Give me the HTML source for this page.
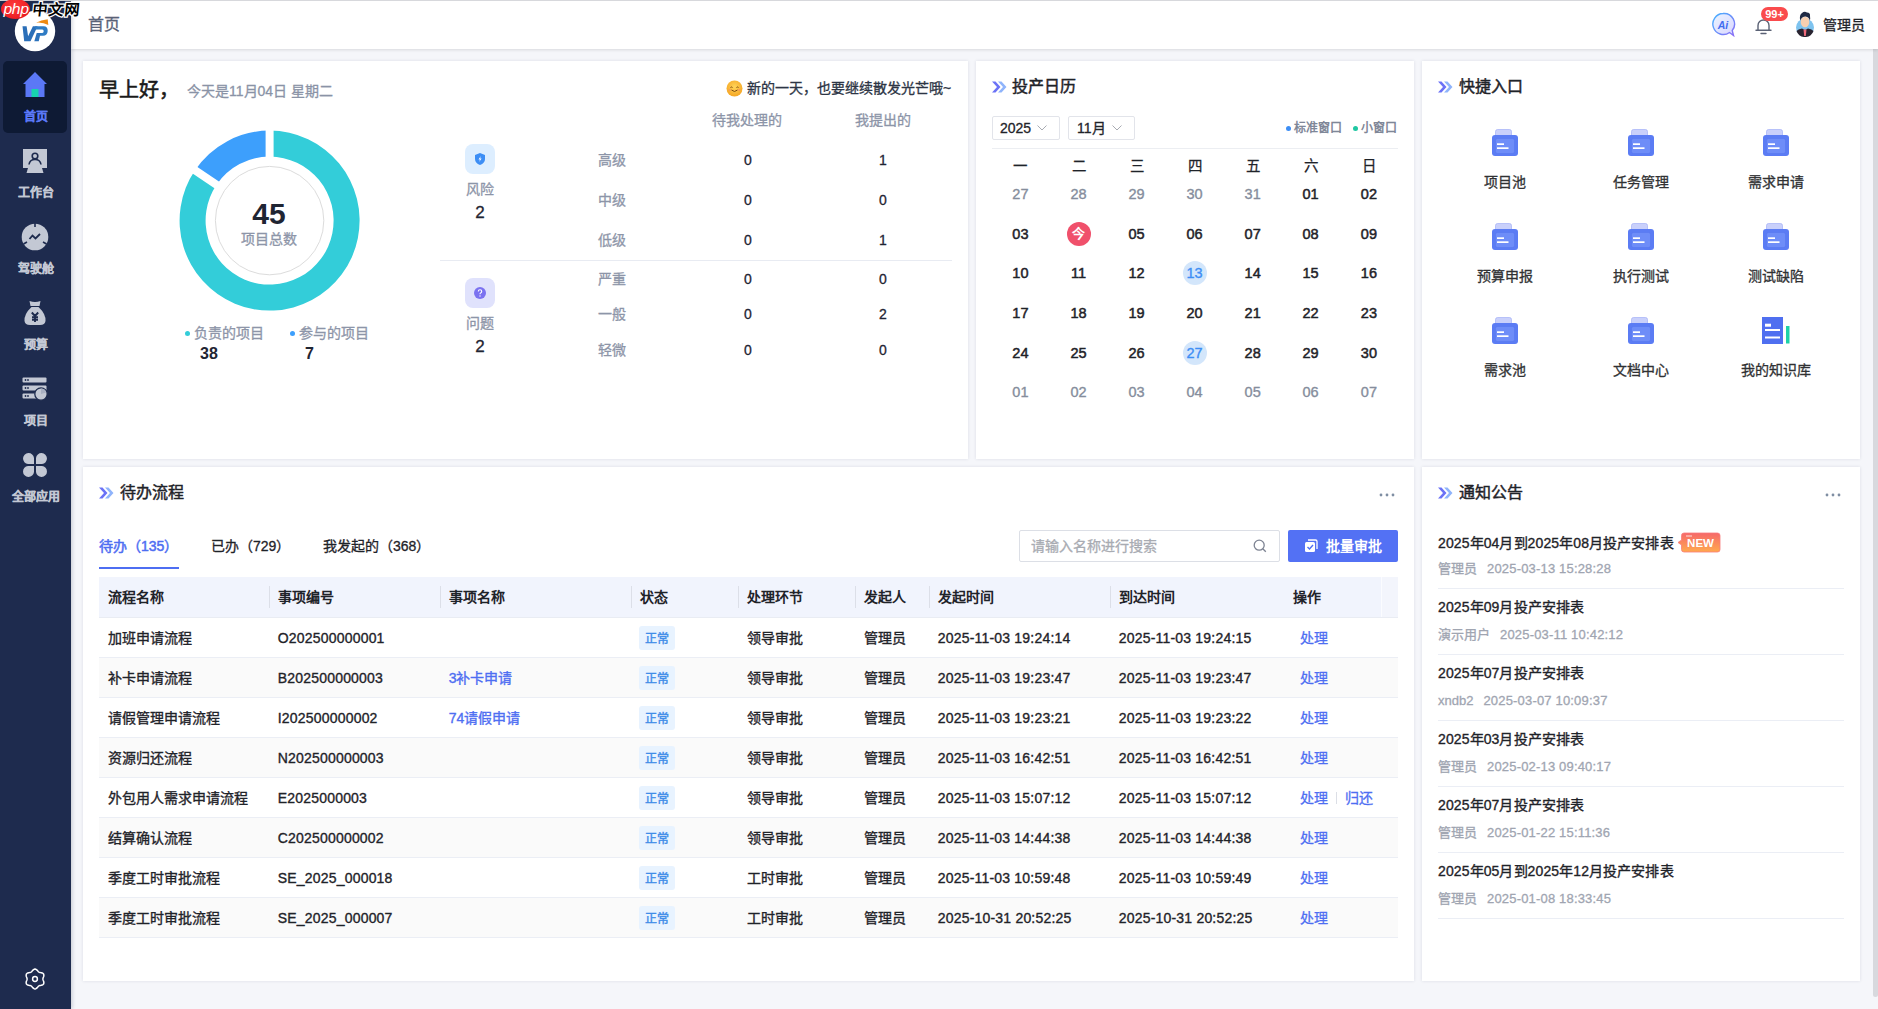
<!DOCTYPE html>
<html lang="zh-CN">
<head>
<meta charset="utf-8">
<style>
*{box-sizing:border-box;margin:0;padding:0}
html,body{width:1878px;height:1009px;overflow:hidden}
body{position:relative;background:#f5f6fa;font-family:"Liberation Sans",sans-serif;font-size:14px;color:#1f2329;-webkit-text-stroke:0.3px currentColor}
[style*="font-weight:700"]{-webkit-text-stroke:0}
.a{position:absolute;white-space:nowrap}
#topline{position:absolute;left:0;top:0;width:1878px;height:1px;background:#dcdde1}
#side{position:absolute;left:0;top:1px;width:71px;height:1008px;background:#1e2b4e;z-index:2;box-shadow:1px 0 4px rgba(20,30,60,.22)}
#side .edge{position:absolute;right:0;top:0;width:1px;height:100%;background:#16223f}
#hdr{position:absolute;left:71px;top:1px;width:1807px;height:48px;background:#fff;box-shadow:0 1px 3px rgba(0,0,0,.12);z-index:1}
.card{position:absolute;background:#fff;box-shadow:0 0 3px rgba(30,40,70,.12)}
#scroll{position:absolute;left:1873px;top:49px;width:5px;height:948px;background:#d8d9de;border-radius:0 0 3px 3px}
.nav{position:absolute;left:0;width:71px;text-align:center;font-size:12px;font-weight:700;color:#c3c8d4;-webkit-text-stroke:0.25px currentColor}
.m{-webkit-text-stroke:0.35px currentColor}
.ttl{font-size:16px;color:#1f2329;-webkit-text-stroke:0.45px currentColor}
</style>
</head>
<body>
<div id="topline"></div>
<div id="side">
<div class="a" style="left:3px;top:60px;width:64px;height:72px;background:#0e1a34;border-radius:5px"></div>
<svg class="a" style="left:23px;top:71px" width="24" height="25" viewBox="0 0 24 25"><path d="M12 0L0 12H2.5V25H21.5V12H24Z" fill="#5b78f6"/><rect x="8.5" y="17" width="7" height="8" fill="#17d4ae"/></svg>
<div class="nav" style="top:106px;color:#5b78f6">首页</div>
<svg class="a" style="left:23px;top:148px" width="24" height="24" viewBox="0 0 24 24"><rect x="0" y="0" width="24" height="19" fill="#c3c8d4"/><path d="M5 19H19L20.5 24H3.5Z" fill="#c3c8d4"/><circle cx="12" cy="7" r="2.8" fill="none" stroke="#1e2b4e" stroke-width="1.6"/><path d="M6 15.5C6.5 12 9 10.5 12 10.5S17.5 12 18 15.5" fill="none" stroke="#1e2b4e" stroke-width="1.6"/></svg>
<div class="nav" style="top:182px">工作台</div>
<svg class="a" style="left:21px;top:222px" width="28" height="28" viewBox="0 0 28 28"><circle cx="14" cy="14" r="13.3" fill="#c3c8d4"/><path d="M14 0V4M2.5 21L6 19M25.5 21L22 19" stroke="#1e2b4e" stroke-width="1.6"/><path d="M8.5 16L11.5 12.5L14.5 15.5L19 11" fill="none" stroke="#1e2b4e" stroke-width="1.8"/></svg>
<div class="nav" style="top:258px">驾驶舱</div>
<svg class="a" style="left:23px;top:300px" width="24" height="24" viewBox="0 0 24 24"><path d="M6.5 0Q12 1.8 17.5 0L16.5 5H7.5Z" fill="#c3c8d4"/><path d="M8.5 6H15.5Q23 13 22.5 20Q22 24 17 24H7Q2 24 1.5 20Q1 13 8.5 6Z" fill="#c3c8d4"/><path d="M8.8 11.5L12 15L15.2 11.5M12 15V21M9 16.2H15M9 18.8H15" fill="none" stroke="#1e2b4e" stroke-width="1.9"/></svg>
<div class="nav" style="top:334px">预算</div>
<svg class="a" style="left:22px;top:376px" width="26" height="24" viewBox="0 0 26 24"><rect x="0.5" y="0.5" width="24" height="5" rx="1" fill="#c3c8d4"/><rect x="0.5" y="8.5" width="24" height="5" rx="1" fill="#c3c8d4"/><rect x="0.5" y="16.5" width="15" height="5" rx="1" fill="#c3c8d4"/><circle cx="3.5" cy="3" r="0.9" fill="#1e2b4e"/><circle cx="6" cy="3" r="0.9" fill="#1e2b4e"/><circle cx="3.5" cy="11" r="0.9" fill="#1e2b4e"/><circle cx="6" cy="11" r="0.9" fill="#1e2b4e"/><circle cx="3.5" cy="19" r="0.9" fill="#1e2b4e"/><circle cx="6" cy="19" r="0.9" fill="#1e2b4e"/><circle cx="19" cy="17" r="6.2" fill="#c3c8d4" stroke="#1e2b4e" stroke-width="1.3"/><path d="M19 17V11.5A5.5 5.5 0 0 1 24.3 15.5Z" fill="#a9b0c2"/></svg>
<div class="nav" style="top:410px">项目</div>
<svg class="a" style="left:22px;top:451px" width="26" height="26" viewBox="0 0 26 26"><path d="M12 12H6A5.5 5.5 0 1 1 12 6Z" fill="#c3c8d4"/><path d="M14 12V6A5.5 5.5 0 1 1 20 12Z" fill="#c3c8d4"/><path d="M12 14V20A5.5 5.5 0 1 1 6 14Z" fill="#c3c8d4"/><path d="M14 14H20A5.5 5.5 0 1 1 14 20Z" fill="#c3c8d4"/></svg>
<div class="nav" style="top:486px">全部应用</div>
<svg class="a" style="left:24px;top:966.5px" width="22" height="22" viewBox="0 0 22 22"><path d="M11.00 1.10L11.85 1.27L12.63 1.74L13.30 2.40L13.87 3.11L14.40 3.72L14.95 4.16L15.61 4.42L16.40 4.57L17.29 4.71L18.20 4.96L19.00 5.40L19.57 6.05L19.85 6.87L19.83 7.79L19.60 8.70L19.27 9.54L19.00 10.30L18.90 11.00L19.00 11.70L19.27 12.46L19.60 13.30L19.83 14.21L19.85 15.13L19.57 15.95L19.00 16.60L18.20 17.04L17.29 17.29L16.40 17.43L15.61 17.58L14.95 17.84L14.40 18.28L13.87 18.89L13.30 19.60L12.63 20.26L11.85 20.73L11.00 20.90L10.15 20.73L9.37 20.26L8.70 19.60L8.13 18.89L7.60 18.28L7.05 17.84L6.39 17.58L5.60 17.43L4.71 17.29L3.80 17.04L3.00 16.60L2.43 15.95L2.15 15.13L2.17 14.21L2.40 13.30L2.73 12.46L3.00 11.70L3.10 11.00L3.00 10.30L2.73 9.54L2.40 8.70L2.17 7.79L2.15 6.87L2.43 6.05L3.00 5.40L3.80 4.96L4.71 4.71L5.60 4.57L6.39 4.42L7.05 4.16L7.60 3.72L8.13 3.11L8.70 2.40L9.37 1.74L10.15 1.27Z" fill="none" stroke="#fff" stroke-width="1.5" stroke-linejoin="round"/><circle cx="11" cy="11" r="2.4" fill="none" stroke="#fff" stroke-width="1.5"/></svg>
<svg class="a" style="left:0;top:0" width="71" height="60" viewBox="0 0 71 60"><circle cx="35" cy="30" r="20.2" fill="#fff"/><path d="M22.5 25.3H26.6L28.1 35.2L32.9 25.3H37.6L30.5 40.2H24.2Z" fill="#2b6fb8"/><path d="M35 25.3H43.6Q47.9 25.3 47.7 30Q47.4 34.8 43 34.8H37.2L37.8 32.1H42.3Q43.6 32 43.7 30.3Q43.7 28.6 42.3 28.6H35.5Z" fill="#2f7cc4"/><path d="M36.7 32.1H40.6L38.8 40.2H34.3Z" fill="#2b72bc"/><path d="M36.1 21.7Q41 19 47.7 18.2L48.3 24.1Q43 21 36.1 21.7Z" fill="#ee8a12"/></svg>
</div>
<div id="hdr">
<div class="a" style="left:17px;top:13px;font-size:16px;color:#596277;line-height:22px">首页</div>
<svg class="a" style="left:1640px;top:11px" width="25" height="25" viewBox="0 0 25 25"><defs><linearGradient id="aig" x1="0" y1="0" x2="1" y2="1"><stop offset="0" stop-color="#eaf4ff"/><stop offset="1" stop-color="#d9d6ff"/></linearGradient><linearGradient id="ais" x1="0" y1="0" x2="1" y2="1"><stop offset="0" stop-color="#45b3ff"/><stop offset="1" stop-color="#8a6cf5"/></linearGradient></defs><path d="M12 1.5A10.5 10.5 0 1 0 18.5 20.5L22.5 23.5L21.2 18.5A10.5 10.5 0 0 0 12 1.5Z" fill="url(#aig)" stroke="url(#ais)" stroke-width="1.4"/><text x="12" y="16.5" text-anchor="middle" font-family="Liberation Sans" font-weight="700" font-size="10.5" fill="#3f6cf0" font-style="italic">Ai</text></svg>
<svg class="a" style="left:1684px;top:16px" width="17" height="18" viewBox="0 0 17 18"><path d="M3 13V8.5A5.5 5.5 0 0 1 14 8.5V13M1 13.2H16M6 16.5H11" fill="none" stroke="#5b6275" stroke-width="1.4" stroke-linecap="round"/></svg>
<div class="a" style="left:1690px;top:6px;width:27px;height:14px;border-radius:7px;background:#fa4b4d;color:#fff;font-size:11px;font-weight:700;line-height:14px;text-align:center">99+</div>
<svg class="a" style="left:1724px;top:9px" width="20" height="27" viewBox="0 0 20 27"><circle cx="10" cy="17.5" r="9" fill="#7ec3ef"/><path d="M1.5 21Q3 19 7 18.5L10 20L13 18.5Q17 19 18.5 21A9 9 0 0 1 1.5 21Z" fill="#2a2430"/><path d="M8.5 19.5H11.5L10.8 26H9.2Z" fill="#f06a7a"/><path d="M7 20L10 22L13 20L12 26H8Z" fill="#fff" opacity=".0"/><ellipse cx="10" cy="12" rx="4.3" ry="5.2" fill="#f7cfb0"/><path d="M5.2 10.5Q4 5 7 3Q9.5 1 12 2.5Q15.5 2.5 15 6Q15.5 9 14.8 10.5Q14 7 10.5 6.5Q7 6.5 5.2 10.5Z" fill="#1f2a44"/></svg>
<div class="a" style="left:1752px;top:13px;font-size:14px;color:#1f2329;line-height:22px">管理员</div>
</div>
<div id="scroll"></div>

<div class="card" style="left:83px;top:61px;width:885px;height:398px">
<svg class="a" style="left:0;top:0" width="885" height="398"><path d="M186.60 69.60A90 90 0 1 1 111.99 109.27L133.54 123.81A64 64 0 1 0 186.60 95.60Z" fill="#33cdd9"/><path d="M111.99 109.27A90 90 0 0 1 186.60 69.60L186.60 95.60A64 64 0 0 0 133.54 123.81Z" fill="#3d9ffc"/><line x1="186.60" y1="97.60" x2="186.60" y2="67.60" stroke="#fff" stroke-width="8"/><line x1="135.20" y1="124.93" x2="110.33" y2="108.15" stroke="#fff" stroke-width="8"/><circle cx="186.60000000000002" cy="159.6" r="54.2" fill="none" stroke="#dcdcdc" stroke-width="1"/></svg>
<div class="a" style="left:16px;top:16px;font-size:20px;color:#1a1a1a;line-height:26px;-webkit-text-stroke:0.55px #1a1a1a">早上好，</div>
<div class="a" style="left:104px;top:20px;font-size:14px;color:#8a93a6;line-height:20px">今天是11月04日 星期二</div>
<svg class="a" style="left:643px;top:19px" width="17" height="17" viewBox="0 0 17 17"><defs><radialGradient id="sm" cx="50%" cy="40%" r="60%"><stop offset="0" stop-color="#ffd45a"/><stop offset="1" stop-color="#f5a623"/></radialGradient></defs><circle cx="8.5" cy="8.5" r="8" fill="url(#sm)"/><path d="M4.5 7.5Q5.5 6.5 6.5 7.5M10.5 7.5Q11.5 6.5 12.5 7.5" fill="none" stroke="#7a4a10" stroke-width="1"/><path d="M5.5 10Q8.5 13 11.5 10" fill="none" stroke="#7a4a10" stroke-width="1"/><ellipse cx="3.8" cy="10" rx="1.3" ry="0.8" fill="#f57b7b" opacity=".7"/><ellipse cx="13.2" cy="10" rx="1.3" ry="0.8" fill="#f57b7b" opacity=".7"/></svg>
<div class="a" style="left:664px;top:17px;font-size:14px;color:#2d3545;line-height:20px">新的一天，也要继续散发光芒哦~</div>
<div class="a" style="left:136px;top:140px;width:100px;text-align:center;font-size:30px;font-weight:700;color:#1f2533;line-height:32px;margin-top:-3px">45</div>
<div class="a" style="left:136px;top:168px;width:100px;text-align:center;font-size:14px;color:#8d95a8;line-height:20px">项目总数</div>
<div class="a" style="left:102px;top:270px;width:5px;height:5px;border-radius:50%;background:#33cdd9"></div>
<div class="a" style="left:111px;top:262px;font-size:14px;color:#8d95a8;line-height:20px">负责的项目</div>
<div class="a" style="left:117px;top:283px;font-size:16px;font-weight:700;color:#1f2533;line-height:20px">38</div>
<div class="a" style="left:207px;top:270px;width:5px;height:5px;border-radius:50%;background:#3d9ffc"></div>
<div class="a" style="left:216px;top:262px;font-size:14px;color:#8d95a8;line-height:20px">参与的项目</div>
<div class="a" style="left:222px;top:283px;font-size:16px;font-weight:700;color:#1f2533;line-height:20px">7</div>
<div class="a" style="left:629px;top:49px;font-size:14px;color:#8d95a8;line-height:20px">待我处理的</div>
<div class="a" style="left:772px;top:49px;font-size:14px;color:#8d95a8;line-height:20px">我提出的</div>
<div class="a" style="left:382px;top:83px;width:30px;height:30px;border-radius:8px;background:#ddeeff"></div>
<svg class="a" style="left:390px;top:91px" width="14" height="14" viewBox="0 0 14 14"><path d="M7 1L12 3V7Q12 11 7 13Q2 11 2 7V3Z" fill="#3d8ef5"/><path d="M7.8 4L5.5 7.6H7L6.2 10L8.6 6.4H7.1Z" fill="#fff"/></svg>
<div class="a" style="left:382px;top:118px;width:30px;text-align:center;font-size:14px;color:#8d95a8;line-height:20px">风险</div>
<div class="a" style="left:382px;top:141px;width:30px;text-align:center;font-size:17px;color:#1f2533;line-height:22px">2</div>
<div class="a" style="left:357px;top:199px;width:512px;height:1px;background:#e8ebf2"></div>
<div class="a" style="left:382px;top:217px;width:30px;height:30px;border-radius:8px;background:#e0e2fc"></div>
<svg class="a" style="left:390px;top:225px" width="14" height="14" viewBox="0 0 14 14"><circle cx="7" cy="7" r="6" fill="#7b72f0"/><path d="M5.3 5.6Q5.3 3.8 7 3.8Q8.7 3.8 8.7 5.4Q8.7 6.5 7.5 7Q7 7.3 7 8.3" fill="none" stroke="#fff" stroke-width="1.1"/><circle cx="7" cy="10" r="0.7" fill="#fff"/></svg>
<div class="a" style="left:382px;top:252px;width:30px;text-align:center;font-size:14px;color:#8d95a8;line-height:20px">问题</div>
<div class="a" style="left:382px;top:275px;width:30px;text-align:center;font-size:17px;color:#1f2533;line-height:22px">2</div>
<div class="a" style="left:515px;top:89px;font-size:14px;color:#8d95a8;line-height:20px">高级</div>
<div class="a" style="left:615px;top:89px;width:100px;text-align:center;font-size:14px;color:#1f2533;line-height:20px">0</div>
<div class="a" style="left:750px;top:89px;width:100px;text-align:center;font-size:14px;color:#1f2533;line-height:20px">1</div>
<div class="a" style="left:515px;top:129px;font-size:14px;color:#8d95a8;line-height:20px">中级</div>
<div class="a" style="left:615px;top:129px;width:100px;text-align:center;font-size:14px;color:#1f2533;line-height:20px">0</div>
<div class="a" style="left:750px;top:129px;width:100px;text-align:center;font-size:14px;color:#1f2533;line-height:20px">0</div>
<div class="a" style="left:515px;top:169px;font-size:14px;color:#8d95a8;line-height:20px">低级</div>
<div class="a" style="left:615px;top:169px;width:100px;text-align:center;font-size:14px;color:#1f2533;line-height:20px">0</div>
<div class="a" style="left:750px;top:169px;width:100px;text-align:center;font-size:14px;color:#1f2533;line-height:20px">1</div>
<div class="a" style="left:515px;top:208px;font-size:14px;color:#8d95a8;line-height:20px">严重</div>
<div class="a" style="left:615px;top:208px;width:100px;text-align:center;font-size:14px;color:#1f2533;line-height:20px">0</div>
<div class="a" style="left:750px;top:208px;width:100px;text-align:center;font-size:14px;color:#1f2533;line-height:20px">0</div>
<div class="a" style="left:515px;top:243px;font-size:14px;color:#8d95a8;line-height:20px">一般</div>
<div class="a" style="left:615px;top:243px;width:100px;text-align:center;font-size:14px;color:#1f2533;line-height:20px">0</div>
<div class="a" style="left:750px;top:243px;width:100px;text-align:center;font-size:14px;color:#1f2533;line-height:20px">2</div>
<div class="a" style="left:515px;top:279px;font-size:14px;color:#8d95a8;line-height:20px">轻微</div>
<div class="a" style="left:615px;top:279px;width:100px;text-align:center;font-size:14px;color:#1f2533;line-height:20px">0</div>
<div class="a" style="left:750px;top:279px;width:100px;text-align:center;font-size:14px;color:#1f2533;line-height:20px">0</div>
</div>
<div class="card" style="left:976px;top:61px;width:438px;height:398px">
<svg class="a" style="left:15px;top:19px" width="16" height="14" viewBox="0 0 16 14"><path d="M1 1.5L6 7L1 12.5H4.5L9.5 7L4.5 1.5Z" fill="#6b72f6"/><path d="M7 1.5L12 7L7 12.5H10.5L15.5 7L10.5 1.5Z" fill="#8fb4fb"/></svg><div class="a ttl" style="left:36px;top:14px;line-height:24px">投产日历</div>
<div class="a" style="left:16px;top:55px;width:68px;height:24px;border:1px solid #e2e4ea;border-radius:2px"></div><div class="a" style="left:24px;top:57px;font-size:14px;color:#1f2329;line-height:20px">2025</div><svg class="a" style="left:61px;top:64px" width="10" height="6" viewBox="0 0 10 6"><path d="M0.5 0.5L5 5L9.5 0.5" fill="none" stroke="#a8abb2" stroke-width="1"/></svg>
<div class="a" style="left:92px;top:55px;width:67px;height:24px;border:1px solid #e2e4ea;border-radius:2px"></div><div class="a" style="left:101px;top:57px;font-size:14px;color:#1f2329;line-height:20px">11月</div><svg class="a" style="left:136px;top:64px" width="10" height="6" viewBox="0 0 10 6"><path d="M0.5 0.5L5 5L9.5 0.5" fill="none" stroke="#a8abb2" stroke-width="1"/></svg>
<div class="a" style="left:310px;top:65px;width:5px;height:5px;border-radius:50%;background:#3d8ef5"></div><div class="a" style="left:318px;top:59px;font-size:12px;font-weight:700;color:#7f8798;line-height:16px">标准窗口</div>
<div class="a" style="left:377px;top:65px;width:5px;height:5px;border-radius:50%;background:#1fc7a2"></div><div class="a" style="left:385px;top:59px;font-size:12px;font-weight:700;color:#7f8798;line-height:16px">小窗口</div>
<div class="a" style="left:16px;top:87px;width:406px;height:1px;background:#eceef2"></div>
<div class="a" style="left:24.4px;top:95.3px;width:40px;text-align:center;font-size:14.5px;color:#1f2329;line-height:20px;-webkit-text-stroke:0.25px #1f2329">一</div>
<div class="a" style="left:82.6px;top:95.3px;width:40px;text-align:center;font-size:14.5px;color:#1f2329;line-height:20px;-webkit-text-stroke:0.25px #1f2329">二</div>
<div class="a" style="left:140.5px;top:95.3px;width:40px;text-align:center;font-size:14.5px;color:#1f2329;line-height:20px;-webkit-text-stroke:0.25px #1f2329">三</div>
<div class="a" style="left:198.5px;top:95.3px;width:40px;text-align:center;font-size:14.5px;color:#1f2329;line-height:20px;-webkit-text-stroke:0.25px #1f2329">四</div>
<div class="a" style="left:256.7px;top:95.3px;width:40px;text-align:center;font-size:14.5px;color:#1f2329;line-height:20px;-webkit-text-stroke:0.25px #1f2329">五</div>
<div class="a" style="left:314.6px;top:95.3px;width:40px;text-align:center;font-size:14.5px;color:#1f2329;line-height:20px;-webkit-text-stroke:0.25px #1f2329">六</div>
<div class="a" style="left:372.9px;top:95.3px;width:40px;text-align:center;font-size:14.5px;color:#1f2329;line-height:20px;-webkit-text-stroke:0.25px #1f2329">日</div>
<div class="a" style="left:24.4px;top:122.6px;width:40px;text-align:center;font-size:14.5px;color:#858d9c;line-height:20px;-webkit-text-stroke:0.35px #858d9c">27</div>
<div class="a" style="left:82.6px;top:122.6px;width:40px;text-align:center;font-size:14.5px;color:#858d9c;line-height:20px;-webkit-text-stroke:0.35px #858d9c">28</div>
<div class="a" style="left:140.5px;top:122.6px;width:40px;text-align:center;font-size:14.5px;color:#858d9c;line-height:20px;-webkit-text-stroke:0.35px #858d9c">29</div>
<div class="a" style="left:198.5px;top:122.6px;width:40px;text-align:center;font-size:14.5px;color:#858d9c;line-height:20px;-webkit-text-stroke:0.35px #858d9c">30</div>
<div class="a" style="left:256.7px;top:122.6px;width:40px;text-align:center;font-size:14.5px;color:#858d9c;line-height:20px;-webkit-text-stroke:0.35px #858d9c">31</div>
<div class="a" style="left:314.6px;top:122.6px;width:40px;text-align:center;font-size:14.5px;color:#1f2329;line-height:20px;-webkit-text-stroke:0.5px #1f2329">01</div>
<div class="a" style="left:372.9px;top:122.6px;width:40px;text-align:center;font-size:14.5px;color:#1f2329;line-height:20px;-webkit-text-stroke:0.5px #1f2329">02</div>
<div class="a" style="left:24.4px;top:162.7px;width:40px;text-align:center;font-size:14.5px;color:#1f2329;line-height:20px;-webkit-text-stroke:0.5px #1f2329">03</div>
<div class="a" style="left:90.6px;top:160.7px;width:24px;height:24px;border-radius:50%;background:#f0506b;color:#fff;font-size:13px;font-weight:700;line-height:24px;text-align:center">今</div>
<div class="a" style="left:140.5px;top:162.7px;width:40px;text-align:center;font-size:14.5px;color:#1f2329;line-height:20px;-webkit-text-stroke:0.5px #1f2329">05</div>
<div class="a" style="left:198.5px;top:162.7px;width:40px;text-align:center;font-size:14.5px;color:#1f2329;line-height:20px;-webkit-text-stroke:0.5px #1f2329">06</div>
<div class="a" style="left:256.7px;top:162.7px;width:40px;text-align:center;font-size:14.5px;color:#1f2329;line-height:20px;-webkit-text-stroke:0.5px #1f2329">07</div>
<div class="a" style="left:314.6px;top:162.7px;width:40px;text-align:center;font-size:14.5px;color:#1f2329;line-height:20px;-webkit-text-stroke:0.5px #1f2329">08</div>
<div class="a" style="left:372.9px;top:162.7px;width:40px;text-align:center;font-size:14.5px;color:#1f2329;line-height:20px;-webkit-text-stroke:0.5px #1f2329">09</div>
<div class="a" style="left:24.4px;top:202.3px;width:40px;text-align:center;font-size:14.5px;color:#1f2329;line-height:20px;-webkit-text-stroke:0.5px #1f2329">10</div>
<div class="a" style="left:82.6px;top:202.3px;width:40px;text-align:center;font-size:14.5px;color:#1f2329;line-height:20px;-webkit-text-stroke:0.5px #1f2329">11</div>
<div class="a" style="left:140.5px;top:202.3px;width:40px;text-align:center;font-size:14.5px;color:#1f2329;line-height:20px;-webkit-text-stroke:0.5px #1f2329">12</div>
<div class="a" style="left:206.5px;top:200.3px;width:24px;height:24px;border-radius:50%;background:#d3e6fb"></div>
<div class="a" style="left:198.5px;top:202.3px;width:40px;text-align:center;font-size:14.5px;color:#3d8ef5;line-height:20px;-webkit-text-stroke:0.35px #3d8ef5">13</div>
<div class="a" style="left:256.7px;top:202.3px;width:40px;text-align:center;font-size:14.5px;color:#1f2329;line-height:20px;-webkit-text-stroke:0.5px #1f2329">14</div>
<div class="a" style="left:314.6px;top:202.3px;width:40px;text-align:center;font-size:14.5px;color:#1f2329;line-height:20px;-webkit-text-stroke:0.5px #1f2329">15</div>
<div class="a" style="left:372.9px;top:202.3px;width:40px;text-align:center;font-size:14.5px;color:#1f2329;line-height:20px;-webkit-text-stroke:0.5px #1f2329">16</div>
<div class="a" style="left:24.4px;top:241.6px;width:40px;text-align:center;font-size:14.5px;color:#1f2329;line-height:20px;-webkit-text-stroke:0.5px #1f2329">17</div>
<div class="a" style="left:82.6px;top:241.6px;width:40px;text-align:center;font-size:14.5px;color:#1f2329;line-height:20px;-webkit-text-stroke:0.5px #1f2329">18</div>
<div class="a" style="left:140.5px;top:241.6px;width:40px;text-align:center;font-size:14.5px;color:#1f2329;line-height:20px;-webkit-text-stroke:0.5px #1f2329">19</div>
<div class="a" style="left:198.5px;top:241.6px;width:40px;text-align:center;font-size:14.5px;color:#1f2329;line-height:20px;-webkit-text-stroke:0.5px #1f2329">20</div>
<div class="a" style="left:256.7px;top:241.6px;width:40px;text-align:center;font-size:14.5px;color:#1f2329;line-height:20px;-webkit-text-stroke:0.5px #1f2329">21</div>
<div class="a" style="left:314.6px;top:241.6px;width:40px;text-align:center;font-size:14.5px;color:#1f2329;line-height:20px;-webkit-text-stroke:0.5px #1f2329">22</div>
<div class="a" style="left:372.9px;top:241.6px;width:40px;text-align:center;font-size:14.5px;color:#1f2329;line-height:20px;-webkit-text-stroke:0.5px #1f2329">23</div>
<div class="a" style="left:24.4px;top:281.6px;width:40px;text-align:center;font-size:14.5px;color:#1f2329;line-height:20px;-webkit-text-stroke:0.5px #1f2329">24</div>
<div class="a" style="left:82.6px;top:281.6px;width:40px;text-align:center;font-size:14.5px;color:#1f2329;line-height:20px;-webkit-text-stroke:0.5px #1f2329">25</div>
<div class="a" style="left:140.5px;top:281.6px;width:40px;text-align:center;font-size:14.5px;color:#1f2329;line-height:20px;-webkit-text-stroke:0.5px #1f2329">26</div>
<div class="a" style="left:206.5px;top:279.6px;width:24px;height:24px;border-radius:50%;background:#d3e6fb"></div>
<div class="a" style="left:198.5px;top:281.6px;width:40px;text-align:center;font-size:14.5px;color:#3d8ef5;line-height:20px;-webkit-text-stroke:0.35px #3d8ef5">27</div>
<div class="a" style="left:256.7px;top:281.6px;width:40px;text-align:center;font-size:14.5px;color:#1f2329;line-height:20px;-webkit-text-stroke:0.5px #1f2329">28</div>
<div class="a" style="left:314.6px;top:281.6px;width:40px;text-align:center;font-size:14.5px;color:#1f2329;line-height:20px;-webkit-text-stroke:0.5px #1f2329">29</div>
<div class="a" style="left:372.9px;top:281.6px;width:40px;text-align:center;font-size:14.5px;color:#1f2329;line-height:20px;-webkit-text-stroke:0.5px #1f2329">30</div>
<div class="a" style="left:24.4px;top:321.3px;width:40px;text-align:center;font-size:14.5px;color:#858d9c;line-height:20px;-webkit-text-stroke:0.35px #858d9c">01</div>
<div class="a" style="left:82.6px;top:321.3px;width:40px;text-align:center;font-size:14.5px;color:#858d9c;line-height:20px;-webkit-text-stroke:0.35px #858d9c">02</div>
<div class="a" style="left:140.5px;top:321.3px;width:40px;text-align:center;font-size:14.5px;color:#858d9c;line-height:20px;-webkit-text-stroke:0.35px #858d9c">03</div>
<div class="a" style="left:198.5px;top:321.3px;width:40px;text-align:center;font-size:14.5px;color:#858d9c;line-height:20px;-webkit-text-stroke:0.35px #858d9c">04</div>
<div class="a" style="left:256.7px;top:321.3px;width:40px;text-align:center;font-size:14.5px;color:#858d9c;line-height:20px;-webkit-text-stroke:0.35px #858d9c">05</div>
<div class="a" style="left:314.6px;top:321.3px;width:40px;text-align:center;font-size:14.5px;color:#858d9c;line-height:20px;-webkit-text-stroke:0.35px #858d9c">06</div>
<div class="a" style="left:372.9px;top:321.3px;width:40px;text-align:center;font-size:14.5px;color:#858d9c;line-height:20px;-webkit-text-stroke:0.35px #858d9c">07</div>
</div>
<div class="card" style="left:1422px;top:61px;width:438px;height:398px">
<svg class="a" style="left:15px;top:19px" width="16" height="14" viewBox="0 0 16 14"><path d="M1 1.5L6 7L1 12.5H4.5L9.5 7L4.5 1.5Z" fill="#6b72f6"/><path d="M7 1.5L12 7L7 12.5H10.5L15.5 7L10.5 1.5Z" fill="#8fb4fb"/></svg><div class="a ttl" style="left:37px;top:14px;line-height:24px">快捷入口</div>
<svg class="a" style="left:69px;top:67px" width="28" height="28" viewBox="0 0 28 28"><rect x="4.5" y="1.5" width="16" height="8" rx="2" fill="#c9d0fb" stroke="#a3b0f6" stroke-width="0.7"/><rect x="1" y="7" width="26" height="21" rx="3" fill="#5b7cf4"/><rect x="4.5" y="10.5" width="19" height="15" rx="2" fill="#6e8df8" stroke="#5574ee" stroke-width="0.5"/><rect x="6" y="15.3" width="7" height="1.7" fill="#fff"/><rect x="6" y="19.3" width="11.5" height="1.7" fill="#fff"/></svg><div class="a" style="left:32.9px;top:110.7px;width:100px;text-align:center;font-size:14px;color:#303133;line-height:20px">项目池</div>
<svg class="a" style="left:205px;top:67px" width="28" height="28" viewBox="0 0 28 28"><rect x="4.5" y="1.5" width="16" height="8" rx="2" fill="#c9d0fb" stroke="#a3b0f6" stroke-width="0.7"/><rect x="1" y="7" width="26" height="21" rx="3" fill="#5b7cf4"/><rect x="4.5" y="10.5" width="19" height="15" rx="2" fill="#6e8df8" stroke="#5574ee" stroke-width="0.5"/><rect x="6" y="15.3" width="7" height="1.7" fill="#fff"/><rect x="6" y="19.3" width="11.5" height="1.7" fill="#fff"/></svg><div class="a" style="left:168.9px;top:110.7px;width:100px;text-align:center;font-size:14px;color:#303133;line-height:20px">任务管理</div>
<svg class="a" style="left:340px;top:67px" width="28" height="28" viewBox="0 0 28 28"><rect x="4.5" y="1.5" width="16" height="8" rx="2" fill="#c9d0fb" stroke="#a3b0f6" stroke-width="0.7"/><rect x="1" y="7" width="26" height="21" rx="3" fill="#5b7cf4"/><rect x="4.5" y="10.5" width="19" height="15" rx="2" fill="#6e8df8" stroke="#5574ee" stroke-width="0.5"/><rect x="6" y="15.3" width="7" height="1.7" fill="#fff"/><rect x="6" y="19.3" width="11.5" height="1.7" fill="#fff"/></svg><div class="a" style="left:303.7px;top:110.7px;width:100px;text-align:center;font-size:14px;color:#303133;line-height:20px">需求申请</div>
<svg class="a" style="left:69px;top:161px" width="28" height="28" viewBox="0 0 28 28"><rect x="4.5" y="1.5" width="16" height="8" rx="2" fill="#c9d0fb" stroke="#a3b0f6" stroke-width="0.7"/><rect x="1" y="7" width="26" height="21" rx="3" fill="#5b7cf4"/><rect x="4.5" y="10.5" width="19" height="15" rx="2" fill="#6e8df8" stroke="#5574ee" stroke-width="0.5"/><rect x="6" y="15.3" width="7" height="1.7" fill="#fff"/><rect x="6" y="19.3" width="11.5" height="1.7" fill="#fff"/></svg><div class="a" style="left:32.9px;top:204.7px;width:100px;text-align:center;font-size:14px;color:#303133;line-height:20px">预算申报</div>
<svg class="a" style="left:205px;top:161px" width="28" height="28" viewBox="0 0 28 28"><rect x="4.5" y="1.5" width="16" height="8" rx="2" fill="#c9d0fb" stroke="#a3b0f6" stroke-width="0.7"/><rect x="1" y="7" width="26" height="21" rx="3" fill="#5b7cf4"/><rect x="4.5" y="10.5" width="19" height="15" rx="2" fill="#6e8df8" stroke="#5574ee" stroke-width="0.5"/><rect x="6" y="15.3" width="7" height="1.7" fill="#fff"/><rect x="6" y="19.3" width="11.5" height="1.7" fill="#fff"/></svg><div class="a" style="left:168.9px;top:204.7px;width:100px;text-align:center;font-size:14px;color:#303133;line-height:20px">执行测试</div>
<svg class="a" style="left:340px;top:161px" width="28" height="28" viewBox="0 0 28 28"><rect x="4.5" y="1.5" width="16" height="8" rx="2" fill="#c9d0fb" stroke="#a3b0f6" stroke-width="0.7"/><rect x="1" y="7" width="26" height="21" rx="3" fill="#5b7cf4"/><rect x="4.5" y="10.5" width="19" height="15" rx="2" fill="#6e8df8" stroke="#5574ee" stroke-width="0.5"/><rect x="6" y="15.3" width="7" height="1.7" fill="#fff"/><rect x="6" y="19.3" width="11.5" height="1.7" fill="#fff"/></svg><div class="a" style="left:303.7px;top:204.7px;width:100px;text-align:center;font-size:14px;color:#303133;line-height:20px">测试缺陷</div>
<svg class="a" style="left:69px;top:255px" width="28" height="28" viewBox="0 0 28 28"><rect x="4.5" y="1.5" width="16" height="8" rx="2" fill="#c9d0fb" stroke="#a3b0f6" stroke-width="0.7"/><rect x="1" y="7" width="26" height="21" rx="3" fill="#5b7cf4"/><rect x="4.5" y="10.5" width="19" height="15" rx="2" fill="#6e8df8" stroke="#5574ee" stroke-width="0.5"/><rect x="6" y="15.3" width="7" height="1.7" fill="#fff"/><rect x="6" y="19.3" width="11.5" height="1.7" fill="#fff"/></svg><div class="a" style="left:32.9px;top:298.7px;width:100px;text-align:center;font-size:14px;color:#303133;line-height:20px">需求池</div>
<svg class="a" style="left:205px;top:255px" width="28" height="28" viewBox="0 0 28 28"><rect x="4.5" y="1.5" width="16" height="8" rx="2" fill="#c9d0fb" stroke="#a3b0f6" stroke-width="0.7"/><rect x="1" y="7" width="26" height="21" rx="3" fill="#5b7cf4"/><rect x="4.5" y="10.5" width="19" height="15" rx="2" fill="#6e8df8" stroke="#5574ee" stroke-width="0.5"/><rect x="6" y="15.3" width="7" height="1.7" fill="#fff"/><rect x="6" y="19.3" width="11.5" height="1.7" fill="#fff"/></svg><div class="a" style="left:168.9px;top:298.7px;width:100px;text-align:center;font-size:14px;color:#303133;line-height:20px">文档中心</div>
<svg class="a" style="left:340px;top:255px" width="28" height="28" viewBox="0 0 28 28"><rect x="0" y="1" width="21" height="27.5" fill="#4f6ff0"/><rect x="3" y="7.7" width="6" height="3" fill="#fff"/><rect x="3" y="13" width="15" height="2" fill="#fff"/><rect x="3" y="20.5" width="15" height="2" fill="#fff"/><rect x="24" y="10" width="3.5" height="17.5" fill="#1ed2a8"/></svg><div class="a" style="left:303.7px;top:298.7px;width:100px;text-align:center;font-size:14px;color:#303133;line-height:20px">我的知识库</div>
</div>
<div class="card" style="left:83px;top:467px;width:1331px;height:514px">
<svg class="a" style="left:15px;top:19px" width="16" height="14" viewBox="0 0 16 14"><path d="M1 1.5L6 7L1 12.5H4.5L9.5 7L4.5 1.5Z" fill="#6b72f6"/><path d="M7 1.5L12 7L7 12.5H10.5L15.5 7L10.5 1.5Z" fill="#8fb4fb"/></svg><div class="a ttl" style="left:37px;top:14px;line-height:24px">待办流程</div>
<svg class="a" style="left:1295.5px;top:25.7px" width="16" height="4" viewBox="0 0 16 4"><circle cx="2" cy="2" r="1.4" fill="#7f8ea3"/><circle cx="8" cy="2" r="1.4" fill="#7f8ea3"/><circle cx="14" cy="2" r="1.4" fill="#7f8ea3"/></svg>
<div class="a" style="left:16px;top:69px;font-size:14px;color:#4e6ef2;line-height:20px;-webkit-text-stroke:0.5px #4e6ef2">待办（135）</div>
<div class="a" style="left:16px;top:100px;width:80px;height:2px;background:#4e6ef2"></div>
<div class="a" style="left:128px;top:69px;font-size:14px;color:#1f2329;line-height:20px">已办（729）</div>
<div class="a" style="left:240px;top:69px;font-size:14px;color:#1f2329;line-height:20px">我发起的（368）</div>
<div class="a" style="left:936px;top:63px;width:261px;height:32px;border:1px solid #dcdfe6;border-radius:2px"></div>
<div class="a" style="left:948px;top:69px;font-size:14px;color:#a8abb2;line-height:20px">请输入名称进行搜索</div>
<svg class="a" style="left:1170px;top:72px" width="14" height="14" viewBox="0 0 14 14"><circle cx="6.2" cy="6.2" r="5" fill="none" stroke="#7d8392" stroke-width="1.3"/><path d="M9.8 9.8L12.8 12.8" stroke="#7d8392" stroke-width="1.3"/></svg>
<div class="a" style="left:1205px;top:63px;width:110px;height:32px;border-radius:2px;background:#5371f4"></div>
<svg class="a" style="left:1221px;top:72px" width="14" height="14" viewBox="0 0 14 14"><rect x="1" y="3" width="10" height="10" rx="1.5" fill="#fff"/><path d="M4 1H11.5Q13 1 13 2.5V10" fill="none" stroke="#fff" stroke-width="1.3"/><path d="M3.5 8L5.5 10L9 6" fill="none" stroke="#4e6ef2" stroke-width="1.4"/></svg>
<div class="a" style="left:1243px;top:69px;font-size:14px;font-weight:700;color:#fff;line-height:20px">批量审批</div>
<div class="a" style="left:16px;top:110px;width:1299px;height:40px;background:#f1f4fd"></div>
<div class="a" style="left:24.5px;top:119.5px;font-size:14px;font-weight:700;color:#1f2329;line-height:20px">流程名称</div>
<div class="a" style="left:194.7px;top:119.5px;font-size:14px;font-weight:700;color:#1f2329;line-height:20px">事项编号</div>
<div class="a" style="left:365.7px;top:119.5px;font-size:14px;font-weight:700;color:#1f2329;line-height:20px">事项名称</div>
<div class="a" style="left:556.9px;top:119.5px;font-size:14px;font-weight:700;color:#1f2329;line-height:20px">状态</div>
<div class="a" style="left:663.8px;top:119.5px;font-size:14px;font-weight:700;color:#1f2329;line-height:20px">处理环节</div>
<div class="a" style="left:780.7px;top:119.5px;font-size:14px;font-weight:700;color:#1f2329;line-height:20px">发起人</div>
<div class="a" style="left:854.7px;top:119.5px;font-size:14px;font-weight:700;color:#1f2329;line-height:20px">发起时间</div>
<div class="a" style="left:1035.7px;top:119.5px;font-size:14px;font-weight:700;color:#1f2329;line-height:20px">到达时间</div>
<div class="a" style="left:1210.2px;top:119.5px;font-size:14px;font-weight:700;color:#1f2329;line-height:20px">操作</div>
<div class="a" style="left:185.5px;top:118.5px;width:1px;height:22px;background:#dcdfe8"></div>
<div class="a" style="left:356.5px;top:118.5px;width:1px;height:22px;background:#dcdfe8"></div>
<div class="a" style="left:547.7px;top:118.5px;width:1px;height:22px;background:#dcdfe8"></div>
<div class="a" style="left:654.6px;top:118.5px;width:1px;height:22px;background:#dcdfe8"></div>
<div class="a" style="left:771.5px;top:118.5px;width:1px;height:22px;background:#dcdfe8"></div>
<div class="a" style="left:845.5px;top:118.5px;width:1px;height:22px;background:#dcdfe8"></div>
<div class="a" style="left:1026.5px;top:118.5px;width:1px;height:22px;background:#dcdfe8"></div>
<div class="a" style="left:1298px;top:110px;width:17px;height:40px;background:#f3f5fc"></div><div class="a" style="left:1297.6px;top:110px;width:1px;height:40px;background:#fbfcff"></div><div class="a" style="left:16px;top:150px;width:1299px;height:1px;background:#e9ecf3"></div>
<div class="a" style="left:16px;top:190.0px;width:1299px;height:1px;background:#ebeef5"></div>
<div class="a m" style="left:24.5px;top:160.5px;font-size:14px;color:#1f2329;line-height:20px">加班申请流程</div>
<div class="a m" style="left:194.7px;top:160.5px;font-size:14px;color:#1f2329;line-height:20px;letter-spacing:0.2px">O202500000001</div>
<div class="a m" style="left:663.8px;top:160.5px;font-size:14px;color:#1f2329;line-height:20px">领导审批</div>
<div class="a m" style="left:780.7px;top:160.5px;font-size:14px;color:#1f2329;line-height:20px">管理员</div>
<div class="a m" style="left:854.7px;top:160.5px;font-size:14px;color:#1f2329;line-height:20px;letter-spacing:0.2px">2025-11-03 19:24:14</div>
<div class="a m" style="left:1035.7px;top:160.5px;font-size:14px;color:#1f2329;line-height:20px;letter-spacing:0.2px">2025-11-03 19:24:15</div>
<div class="a" style="left:556px;top:158.5px;width:36px;height:24px;border-radius:3px;background:#e8f3ff;color:#3f8ce8;font-size:12px;line-height:26px;text-align:center;-webkit-text-stroke:0.4px #3f8ce8">正常</div>
<div class="a" style="left:1217px;top:160.5px;font-size:14px;color:#4e6ef2;line-height:20px">处理</div>
<div class="a" style="left:16px;top:190.5px;width:1299px;height:40px;background:#fafafa"></div>
<div class="a" style="left:16px;top:230.0px;width:1299px;height:1px;background:#ebeef5"></div>
<div class="a m" style="left:24.5px;top:200.5px;font-size:14px;color:#1f2329;line-height:20px">补卡申请流程</div>
<div class="a m" style="left:194.7px;top:200.5px;font-size:14px;color:#1f2329;line-height:20px;letter-spacing:0.2px">B202500000003</div>
<div class="a m" style="left:365.7px;top:200.5px;font-size:14px;color:#4e6ef2;line-height:20px">3补卡申请</div>
<div class="a m" style="left:663.8px;top:200.5px;font-size:14px;color:#1f2329;line-height:20px">领导审批</div>
<div class="a m" style="left:780.7px;top:200.5px;font-size:14px;color:#1f2329;line-height:20px">管理员</div>
<div class="a m" style="left:854.7px;top:200.5px;font-size:14px;color:#1f2329;line-height:20px;letter-spacing:0.2px">2025-11-03 19:23:47</div>
<div class="a m" style="left:1035.7px;top:200.5px;font-size:14px;color:#1f2329;line-height:20px;letter-spacing:0.2px">2025-11-03 19:23:47</div>
<div class="a" style="left:556px;top:198.5px;width:36px;height:24px;border-radius:3px;background:#e8f3ff;color:#3f8ce8;font-size:12px;line-height:26px;text-align:center;-webkit-text-stroke:0.4px #3f8ce8">正常</div>
<div class="a" style="left:1217px;top:200.5px;font-size:14px;color:#4e6ef2;line-height:20px">处理</div>
<div class="a" style="left:16px;top:270.0px;width:1299px;height:1px;background:#ebeef5"></div>
<div class="a m" style="left:24.5px;top:240.5px;font-size:14px;color:#1f2329;line-height:20px">请假管理申请流程</div>
<div class="a m" style="left:194.7px;top:240.5px;font-size:14px;color:#1f2329;line-height:20px;letter-spacing:0.2px">I202500000002</div>
<div class="a m" style="left:365.7px;top:240.5px;font-size:14px;color:#4e6ef2;line-height:20px">74请假申请</div>
<div class="a m" style="left:663.8px;top:240.5px;font-size:14px;color:#1f2329;line-height:20px">领导审批</div>
<div class="a m" style="left:780.7px;top:240.5px;font-size:14px;color:#1f2329;line-height:20px">管理员</div>
<div class="a m" style="left:854.7px;top:240.5px;font-size:14px;color:#1f2329;line-height:20px;letter-spacing:0.2px">2025-11-03 19:23:21</div>
<div class="a m" style="left:1035.7px;top:240.5px;font-size:14px;color:#1f2329;line-height:20px;letter-spacing:0.2px">2025-11-03 19:23:22</div>
<div class="a" style="left:556px;top:238.5px;width:36px;height:24px;border-radius:3px;background:#e8f3ff;color:#3f8ce8;font-size:12px;line-height:26px;text-align:center;-webkit-text-stroke:0.4px #3f8ce8">正常</div>
<div class="a" style="left:1217px;top:240.5px;font-size:14px;color:#4e6ef2;line-height:20px">处理</div>
<div class="a" style="left:16px;top:270.5px;width:1299px;height:40px;background:#fafafa"></div>
<div class="a" style="left:16px;top:310.0px;width:1299px;height:1px;background:#ebeef5"></div>
<div class="a m" style="left:24.5px;top:280.5px;font-size:14px;color:#1f2329;line-height:20px">资源归还流程</div>
<div class="a m" style="left:194.7px;top:280.5px;font-size:14px;color:#1f2329;line-height:20px;letter-spacing:0.2px">N202500000003</div>
<div class="a m" style="left:663.8px;top:280.5px;font-size:14px;color:#1f2329;line-height:20px">领导审批</div>
<div class="a m" style="left:780.7px;top:280.5px;font-size:14px;color:#1f2329;line-height:20px">管理员</div>
<div class="a m" style="left:854.7px;top:280.5px;font-size:14px;color:#1f2329;line-height:20px;letter-spacing:0.2px">2025-11-03 16:42:51</div>
<div class="a m" style="left:1035.7px;top:280.5px;font-size:14px;color:#1f2329;line-height:20px;letter-spacing:0.2px">2025-11-03 16:42:51</div>
<div class="a" style="left:556px;top:278.5px;width:36px;height:24px;border-radius:3px;background:#e8f3ff;color:#3f8ce8;font-size:12px;line-height:26px;text-align:center;-webkit-text-stroke:0.4px #3f8ce8">正常</div>
<div class="a" style="left:1217px;top:280.5px;font-size:14px;color:#4e6ef2;line-height:20px">处理</div>
<div class="a" style="left:16px;top:350.0px;width:1299px;height:1px;background:#ebeef5"></div>
<div class="a m" style="left:24.5px;top:320.5px;font-size:14px;color:#1f2329;line-height:20px">外包用人需求申请流程</div>
<div class="a m" style="left:194.7px;top:320.5px;font-size:14px;color:#1f2329;line-height:20px;letter-spacing:0.2px">E2025000003</div>
<div class="a m" style="left:663.8px;top:320.5px;font-size:14px;color:#1f2329;line-height:20px">领导审批</div>
<div class="a m" style="left:780.7px;top:320.5px;font-size:14px;color:#1f2329;line-height:20px">管理员</div>
<div class="a m" style="left:854.7px;top:320.5px;font-size:14px;color:#1f2329;line-height:20px;letter-spacing:0.2px">2025-11-03 15:07:12</div>
<div class="a m" style="left:1035.7px;top:320.5px;font-size:14px;color:#1f2329;line-height:20px;letter-spacing:0.2px">2025-11-03 15:07:12</div>
<div class="a" style="left:556px;top:318.5px;width:36px;height:24px;border-radius:3px;background:#e8f3ff;color:#3f8ce8;font-size:12px;line-height:26px;text-align:center;-webkit-text-stroke:0.4px #3f8ce8">正常</div>
<div class="a" style="left:1217px;top:320.5px;font-size:14px;color:#4e6ef2;line-height:20px">处理</div>
<div class="a" style="left:1253px;top:324.5px;width:1px;height:12px;background:#dcdfe6"></div>
<div class="a" style="left:1262px;top:320.5px;font-size:14px;color:#4e6ef2;line-height:20px">归还</div>
<div class="a" style="left:16px;top:350.5px;width:1299px;height:40px;background:#fafafa"></div>
<div class="a" style="left:16px;top:390.0px;width:1299px;height:1px;background:#ebeef5"></div>
<div class="a m" style="left:24.5px;top:360.5px;font-size:14px;color:#1f2329;line-height:20px">结算确认流程</div>
<div class="a m" style="left:194.7px;top:360.5px;font-size:14px;color:#1f2329;line-height:20px;letter-spacing:0.2px">C202500000002</div>
<div class="a m" style="left:663.8px;top:360.5px;font-size:14px;color:#1f2329;line-height:20px">领导审批</div>
<div class="a m" style="left:780.7px;top:360.5px;font-size:14px;color:#1f2329;line-height:20px">管理员</div>
<div class="a m" style="left:854.7px;top:360.5px;font-size:14px;color:#1f2329;line-height:20px;letter-spacing:0.2px">2025-11-03 14:44:38</div>
<div class="a m" style="left:1035.7px;top:360.5px;font-size:14px;color:#1f2329;line-height:20px;letter-spacing:0.2px">2025-11-03 14:44:38</div>
<div class="a" style="left:556px;top:358.5px;width:36px;height:24px;border-radius:3px;background:#e8f3ff;color:#3f8ce8;font-size:12px;line-height:26px;text-align:center;-webkit-text-stroke:0.4px #3f8ce8">正常</div>
<div class="a" style="left:1217px;top:360.5px;font-size:14px;color:#4e6ef2;line-height:20px">处理</div>
<div class="a" style="left:16px;top:430.0px;width:1299px;height:1px;background:#ebeef5"></div>
<div class="a m" style="left:24.5px;top:400.5px;font-size:14px;color:#1f2329;line-height:20px">季度工时审批流程</div>
<div class="a m" style="left:194.7px;top:400.5px;font-size:14px;color:#1f2329;line-height:20px;letter-spacing:0.2px">SE_2025_000018</div>
<div class="a m" style="left:663.8px;top:400.5px;font-size:14px;color:#1f2329;line-height:20px">工时审批</div>
<div class="a m" style="left:780.7px;top:400.5px;font-size:14px;color:#1f2329;line-height:20px">管理员</div>
<div class="a m" style="left:854.7px;top:400.5px;font-size:14px;color:#1f2329;line-height:20px;letter-spacing:0.2px">2025-11-03 10:59:48</div>
<div class="a m" style="left:1035.7px;top:400.5px;font-size:14px;color:#1f2329;line-height:20px;letter-spacing:0.2px">2025-11-03 10:59:49</div>
<div class="a" style="left:556px;top:398.5px;width:36px;height:24px;border-radius:3px;background:#e8f3ff;color:#3f8ce8;font-size:12px;line-height:26px;text-align:center;-webkit-text-stroke:0.4px #3f8ce8">正常</div>
<div class="a" style="left:1217px;top:400.5px;font-size:14px;color:#4e6ef2;line-height:20px">处理</div>
<div class="a" style="left:16px;top:430.5px;width:1299px;height:40px;background:#fafafa"></div>
<div class="a" style="left:16px;top:470.0px;width:1299px;height:1px;background:#ebeef5"></div>
<div class="a m" style="left:24.5px;top:440.5px;font-size:14px;color:#1f2329;line-height:20px">季度工时审批流程</div>
<div class="a m" style="left:194.7px;top:440.5px;font-size:14px;color:#1f2329;line-height:20px;letter-spacing:0.2px">SE_2025_000007</div>
<div class="a m" style="left:663.8px;top:440.5px;font-size:14px;color:#1f2329;line-height:20px">工时审批</div>
<div class="a m" style="left:780.7px;top:440.5px;font-size:14px;color:#1f2329;line-height:20px">管理员</div>
<div class="a m" style="left:854.7px;top:440.5px;font-size:14px;color:#1f2329;line-height:20px;letter-spacing:0.2px">2025-10-31 20:52:25</div>
<div class="a m" style="left:1035.7px;top:440.5px;font-size:14px;color:#1f2329;line-height:20px;letter-spacing:0.2px">2025-10-31 20:52:25</div>
<div class="a" style="left:556px;top:438.5px;width:36px;height:24px;border-radius:3px;background:#e8f3ff;color:#3f8ce8;font-size:12px;line-height:26px;text-align:center;-webkit-text-stroke:0.4px #3f8ce8">正常</div>
<div class="a" style="left:1217px;top:440.5px;font-size:14px;color:#4e6ef2;line-height:20px">处理</div>
</div>
<div class="card" style="left:1422px;top:467px;width:438px;height:514px">
<svg class="a" style="left:15px;top:19px" width="16" height="14" viewBox="0 0 16 14"><path d="M1 1.5L6 7L1 12.5H4.5L9.5 7L4.5 1.5Z" fill="#6b72f6"/><path d="M7 1.5L12 7L7 12.5H10.5L15.5 7L10.5 1.5Z" fill="#8fb4fb"/></svg><div class="a ttl" style="left:37px;top:14px;line-height:24px">通知公告</div>
<svg class="a" style="left:402.5px;top:25.7px" width="16" height="4" viewBox="0 0 16 4"><circle cx="2" cy="2" r="1.4" fill="#7f8ea3"/><circle cx="8" cy="2" r="1.4" fill="#7f8ea3"/><circle cx="14" cy="2" r="1.4" fill="#7f8ea3"/></svg>
<div class="a m" style="left:16px;top:65.7px;font-size:14px;color:#1f2329;line-height:20px;letter-spacing:0.1px">2025年04月到2025年08月投产安排表</div>
<svg class="a" style="left:255px;top:65px" width="44" height="22" viewBox="0 0 44 22"><defs><linearGradient id="ng" x1="0" y1="0" x2="0" y2="1"><stop offset="0" stop-color="#f6686a"/><stop offset="1" stop-color="#ffaa4e"/></linearGradient></defs><path d="M7 1H40.5Q43 1 43 3.5V17.5Q43 20 40.5 20H7Q4.5 20 4.5 17.5V13L1 10.5L4.5 8V3.5Q4.5 1 7 1Z" fill="url(#ng)" stroke="#f97c7c" stroke-width="0.8"/><rect x="9" y="3.5" width="6" height="1" fill="#fff" opacity=".8"/><text x="23.5" y="15" text-anchor="middle" font-family="Liberation Sans" font-weight="700" font-size="11.5" fill="#fff" style="-webkit-text-stroke:0">NEW</text></svg>
<div class="a" style="left:16px;top:92.2px;font-size:13px;color:#a0a5b1;line-height:20px">管理员<span style="margin-left:10px;letter-spacing:0.18px">2025-03-13 15:28:28</span></div>
<div class="a" style="left:16px;top:120.7px;width:406px;height:1px;background:#ebeef5"></div>
<div class="a m" style="left:16px;top:129.6px;font-size:14px;color:#1f2329;line-height:20px;letter-spacing:0.1px">2025年09月投产安排表</div>
<div class="a" style="left:16px;top:157.9px;font-size:13px;color:#a0a5b1;line-height:20px">演示用户<span style="margin-left:10px;letter-spacing:0.18px">2025-03-11 10:42:12</span></div>
<div class="a" style="left:16px;top:186.7px;width:406px;height:1px;background:#ebeef5"></div>
<div class="a m" style="left:16px;top:195.6px;font-size:14px;color:#1f2329;line-height:20px;letter-spacing:0.1px">2025年07月投产安排表</div>
<div class="a" style="left:16px;top:223.9px;font-size:13px;color:#a0a5b1;line-height:20px">xndb2<span style="margin-left:10px;letter-spacing:0.18px">2025-03-07 10:09:37</span></div>
<div class="a" style="left:16px;top:252.7px;width:406px;height:1px;background:#ebeef5"></div>
<div class="a m" style="left:16px;top:261.6px;font-size:14px;color:#1f2329;line-height:20px;letter-spacing:0.1px">2025年03月投产安排表</div>
<div class="a" style="left:16px;top:289.9px;font-size:13px;color:#a0a5b1;line-height:20px">管理员<span style="margin-left:10px;letter-spacing:0.18px">2025-02-13 09:40:17</span></div>
<div class="a" style="left:16px;top:318.7px;width:406px;height:1px;background:#ebeef5"></div>
<div class="a m" style="left:16px;top:327.6px;font-size:14px;color:#1f2329;line-height:20px;letter-spacing:0.1px">2025年07月投产安排表</div>
<div class="a" style="left:16px;top:355.9px;font-size:13px;color:#a0a5b1;line-height:20px">管理员<span style="margin-left:10px;letter-spacing:0.18px">2025-01-22 15:11:36</span></div>
<div class="a" style="left:16px;top:384.7px;width:406px;height:1px;background:#ebeef5"></div>
<div class="a m" style="left:16px;top:393.6px;font-size:14px;color:#1f2329;line-height:20px;letter-spacing:0.1px">2025年05月到2025年12月投产安排表</div>
<div class="a" style="left:16px;top:421.9px;font-size:13px;color:#a0a5b1;line-height:20px">管理员<span style="margin-left:10px;letter-spacing:0.18px">2025-01-08 18:33:45</span></div>
<div class="a" style="left:16px;top:450.7px;width:406px;height:1px;background:#ebeef5"></div>
</div>

<div class="a" style="z-index:10;left:1px;top:-1px;width:29px;height:20px;border-radius:50%;background:radial-gradient(ellipse at 45% 35%,#ff3b3b,#e3101a)"></div>
<div class="a" style="z-index:10;left:4px;top:1px;font-size:15px;font-style:italic;-webkit-text-stroke:0;color:#fff;line-height:16px;letter-spacing:-0.3px;transform:scaleX(1.05)">php</div>
<div class="a" style="z-index:10;left:33px;top:1px;font-size:15px;font-weight:700;letter-spacing:1px;color:#000;line-height:17px;-webkit-text-stroke:2.5px #fff;paint-order:stroke fill;transform:skewX(-6deg)">中文网</div>
</body>
</html>
